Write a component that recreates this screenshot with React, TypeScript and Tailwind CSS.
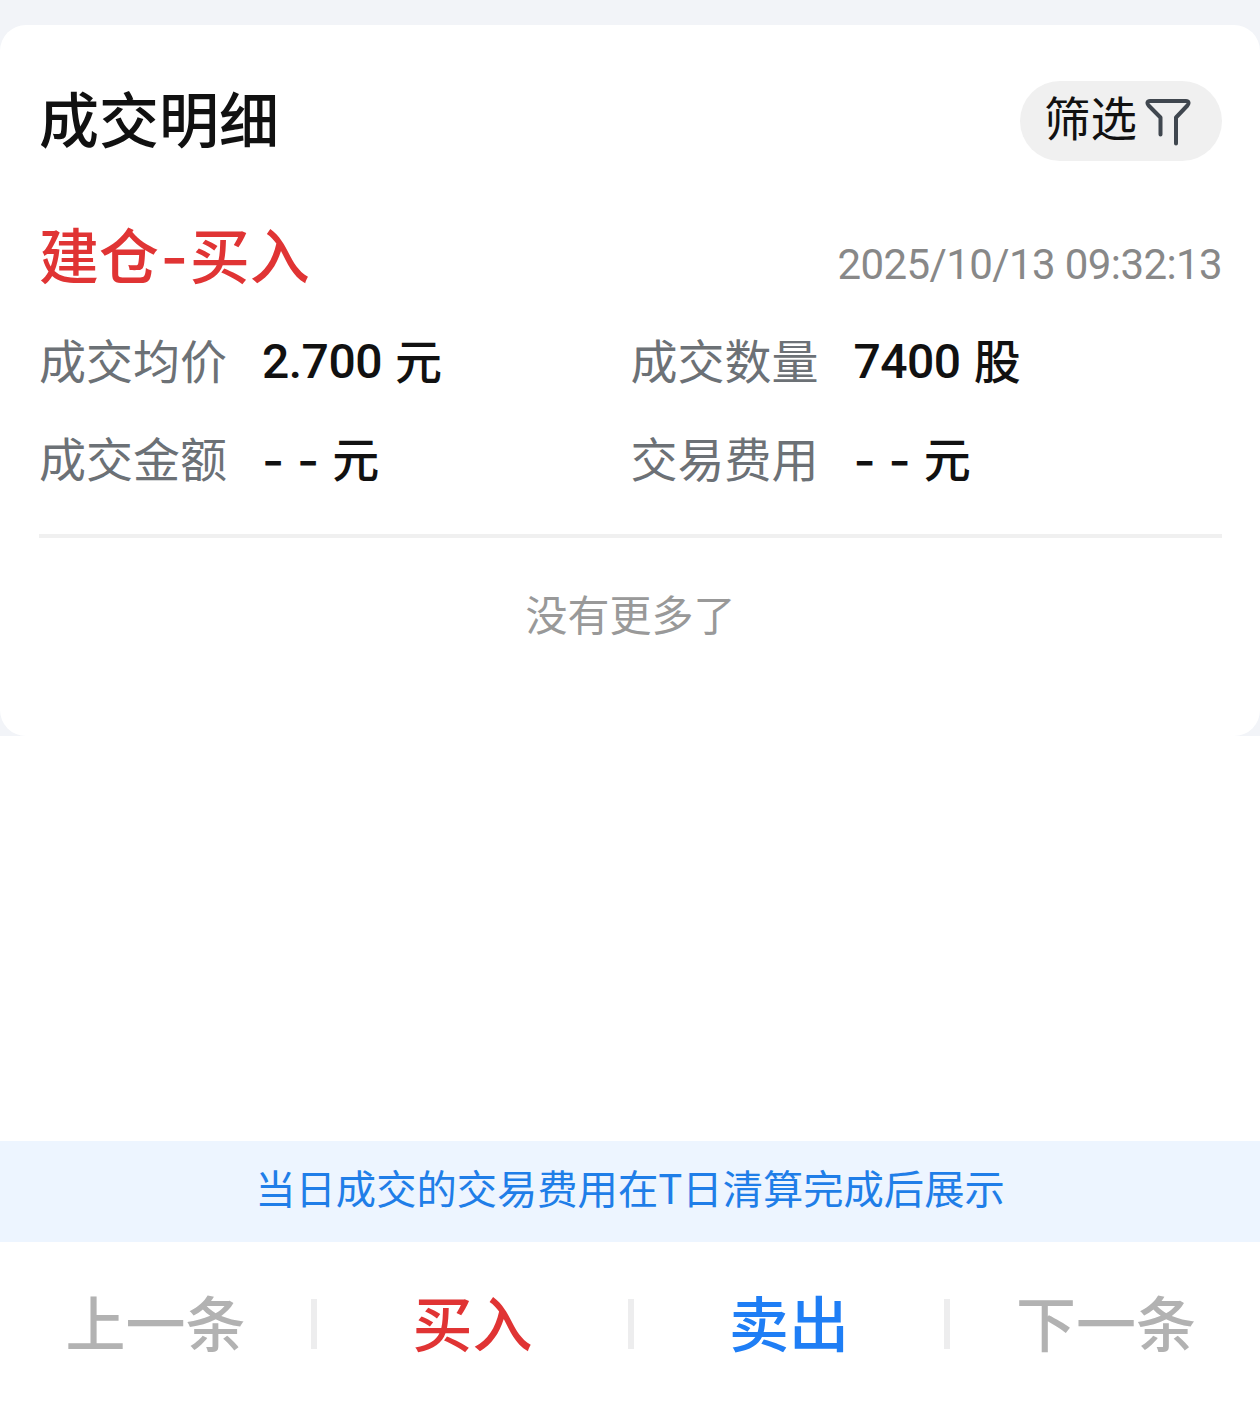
import clsx from 'clsx';

interface Field {
  label: string;
  value?: string;
  unit: string;
}

interface Trade {
  id: string;
  stage: string;
  side: string;
  time: string;
  fields: Field[];
}

const trades: Trade[] = [
  {
    id: '1',
    stage: '建仓',
    side: '买入',
    time: '2025/10/13 09:32:13',
    fields: [
      { label: '成交均价', value: '2.700', unit: '元' },
      { label: '成交数量', value: '7400', unit: '股' },
      { label: '成交金额', unit: '元' },
      { label: '交易费用', unit: '元' },
    ],
  },
];

const actions = [
  { label: '上一条', className: 'text-[#b2b2b2] w-[311px]' },
  { label: '买入', className: 'text-[#e03434] w-[311px]' },
  { label: '卖出', className: 'text-[#1f7ef5] w-[310px]' },
  { label: '下一条', className: 'text-[#b2b2b2] w-[310px] pl-0.5' },
];

function FilterIcon() {
  return (
    <svg
      width="46"
      height="50"
      viewBox="0 0 46 50"
      fill="none"
      stroke="#40474f"
      strokeWidth="4"
      strokeLinecap="round"
      strokeLinejoin="round"
      className="mt-0.5 shrink-0"
    >
      <path d="M15.5 37.5V20.5L3.6 8.5C1.6 6.2 2.4 4 5 4H41C43.6 4 44.4 6.2 42.4 8.5L31 20.5V46.5" />
    </svg>
  );
}

function TradeItem({ trade }: { trade: Trade }) {
  return (
    <div className="h-[332px] border-b-4 border-[#f0f0f0]">
      <div className="flex h-[103px] items-center justify-between">
        <span className="pb-1.5 text-[60px] font-medium text-[#e03434]">
          {trade.stage}
          <span className="mx-[1.5px] font-['Inter']">-</span>
          {trade.side}
        </span>
        <span className="pt-3.5 font-['Roboto'] text-[42px] tracking-[-0.6px] text-[#888]">{trade.time}</span>
      </div>
      <div className="grid grid-cols-2">
        {trade.fields.map((field) => (
          <div key={field.label} className="flex h-[98px] items-center text-[47px]">
            <span className="w-[223px] text-[#6c7176]">{field.label}</span>
            <span
              className={clsx(
                'text-[48px] font-medium text-[#111]',
                field.value ? "pt-2 font-['Roboto'] tracking-[-0.5px]" : "pt-2.5 font-['Inter']"
              )}
            >
              {field.value ?? '- -'}
            </span>
            <span className="ml-[13px] font-medium text-[#111]">{field.unit}</span>
          </div>
        ))}
      </div>
    </div>
  );
}

export default function App() {
  return (
    <div className="flex h-[1409px] w-[1260px] flex-col overflow-hidden whitespace-nowrap bg-white font-['Noto_Sans_CJK_SC',sans-serif] leading-none">
      <div className="bg-[#f2f4f8] pt-[25px]">
        <div className="h-[711px] rounded-[26px] bg-white pt-[56px] pr-[38px] pl-[39px]">
          <div className="mb-[45px] flex h-20 items-center justify-between">
            <h1 className="pb-2 text-[60px] font-medium text-[#111]">成交明细</h1>
            <button className="flex h-20 w-[202px] items-center gap-2 rounded-full bg-[#f0f0f0] pl-[24px] text-[46.5px] text-[#111]">
              <span className="pb-2.5">筛选</span>
              <FilterIcon />
            </button>
          </div>
          {trades.map((trade) => (
            <TradeItem key={trade.id} trade={trade} />
          ))}
          <p className="pt-[54px] text-center text-[42px] text-[#999]">没有更多了</p>
        </div>
      </div>
      <div className="mt-auto flex h-[101px] items-center justify-center bg-[#edf5ff] pb-[9px] text-[40.3px] text-[#1f7ee8]">
        当日成交的交易费用在T日清算完成后展示
      </div>
      <div className="flex h-[167px] items-center pb-1">
        {actions.map((action, i) => (
          <div key={action.label} className="flex items-center">
            {i > 0 && <div className="h-[50px] w-1.5 bg-[#ededee]" />}
            <button className={clsx('pb-1.5 text-center text-[60px] font-medium', action.className)}>
              {action.label}
            </button>
          </div>
        ))}
      </div>
    </div>
  );
}
